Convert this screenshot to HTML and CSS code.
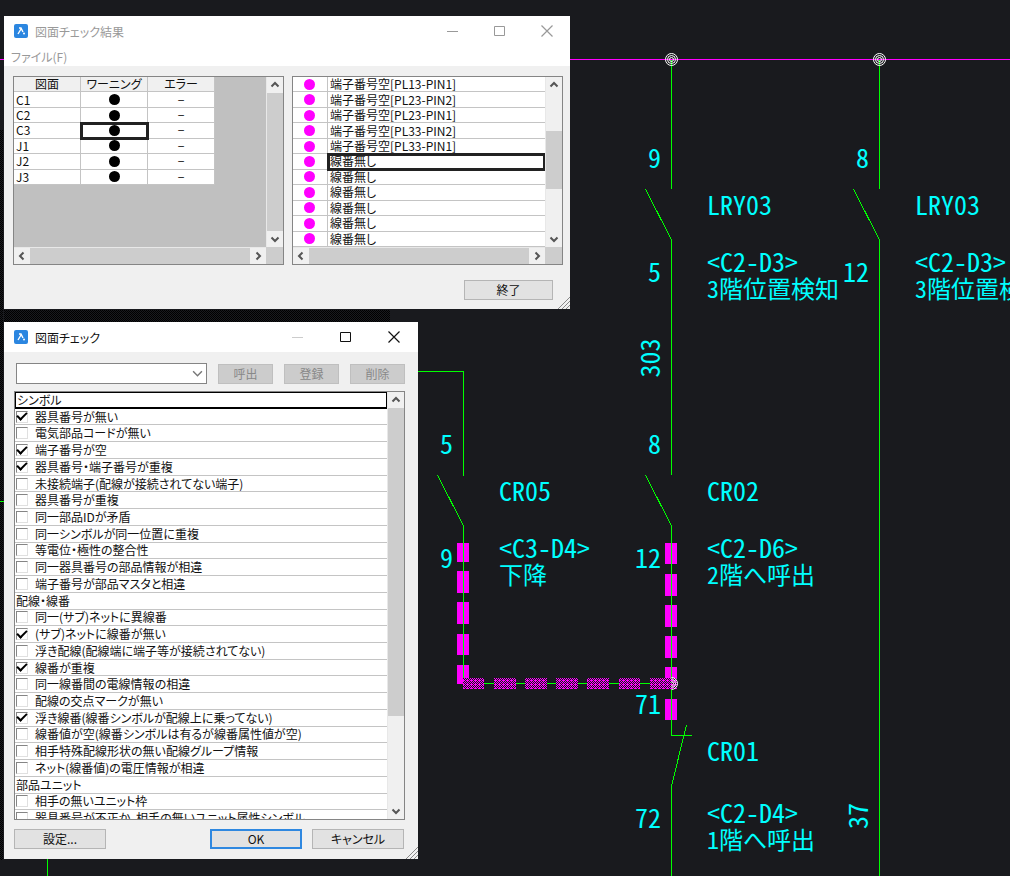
FILE: index.html
```html
<!DOCTYPE html>
<html lang="ja">
<head>
<meta charset="utf-8">
<title>図面チェック</title>
<link rel="stylesheet" href="styles.css">
</head>
<body>
<main class="desktop">
<svg class="drawing" role="img" aria-label="回路図">
  <defs>
    <pattern id="hatch" width="4" height="4" patternUnits="userSpaceOnUse"><path fill="#f0f" d="M0 0h1v1H0zM2 0h2v1H2zM1 1h1v1H1zM3 1h1v1H3zM0 2h1v1H0zM2 2h1v1H2zM1 3h1v1H1zM3 3h1v1H3z"/></pattern>
    <pattern id="shade" width="2" height="2" patternUnits="userSpaceOnUse"><path fill="#000" d="M0 0h1v1H0zM1 1h1v1H1z"/></pattern>
    <g id="node" fill="none" stroke="#fff"><circle r="6"/><circle r="4"/><circle r="2"/></g>
    <clipPath id="right-half"><path d="M0-8h8V8H0z"/></clipPath>
  </defs>
  <g shape-rendering="crispEdges">
    <path fill="url(#shade)" d="M4 310h386v12H4zM0 130h3v730H0z"/>
    <path fill="#f0f" d="M457 543h12v19h-12zM457 571h12v22h-12zM457 602h12v22h-12zM457 634h12v21h-12zM457 665h12v13h-6v6h-6zM665 543h12v21h-12zM665 574h12v22h-12zM665 605h12v22h-12zM665 636h12v22h-12zM665 667h12v11h-12zM665 699h12v21h-12z"/>
    <path class="wire" d="M671.5 59V189M645.5 189L671.5 240V475M645.5 475L671.5 526V735.5H692M686.5 725L671.5 786V876M879.5 59V189M853.5 189L879.5 240V876M418 371.5H463.5V476M437.5 475L463.5 526V678M463 683.5H671M0 501.5H4M47.5 859V876"/>
    <path class="bus" d="M0 59.5H2000"/>
    <path fill="#191a1e" d="M463 678h21v11h-21zM494 678h22v11h-22zM525 678h22v11h-22zM556 678h22v11h-22zM587 678h22v11h-22zM619 678h21v11h-21zM650 678h21v11h-21z"/>
    <path fill="url(#hatch)" d="M463 678h21v11h-21zM494 678h22v11h-22zM525 678h22v11h-22zM556 678h22v11h-22zM587 678h22v11h-22zM619 678h21v11h-21zM650 678h27v11h-27z"/>
  </g>
  <use href="#node" transform="translate(671.5 59.5)"/>
  <use href="#node" transform="translate(879.5 59.5)"/>
  <g transform="translate(671.5 683.5)"><g clip-path="url(#right-half)"><use href="#node"/></g></g>
  <g class="pin">
    <text x="661" y="168">9</text><text x="661" y="282">5</text>
    <text x="661" y="454">8</text><text x="661" y="568">12</text>
    <text x="661" y="714">71</text><text x="661" y="828">72</text>
    <text x="453" y="454">5</text><text x="453" y="568">9</text>
    <text x="869" y="168">8</text><text x="869" y="282">12</text>
  </g>
  <g class="wire-no">
    <text transform="translate(660 358) rotate(-90)">303</text>
    <text transform="translate(868 816) rotate(-90)">37</text>
  </g>
  <g class="label">
    <text x="707" y="215">LRY03</text><text x="707" y="272">&lt;C2-D3&gt;</text><text class="jp" x="707" y="298">3階位置検知</text>
    <text x="915" y="215">LRY03</text><text x="915" y="272">&lt;C2-D3&gt;</text><text class="jp" x="915" y="298">3階位置検知</text>
    <text x="499" y="501">CR05</text><text x="499" y="558">&lt;C3-D4&gt;</text><text class="jp" x="499" y="584">下降</text>
    <text x="707" y="501">CR02</text><text x="707" y="558">&lt;C2-D6&gt;</text><text class="jp" x="707" y="584">2階へ呼出</text>
    <text x="707" y="761">CR01</text><text x="707" y="823">&lt;C2-D4&gt;</text><text class="jp" x="707" y="849">1階へ呼出</text>
  </g>
</svg>

<svg class="sprites" aria-hidden="true">
  <symbol id="logo" viewBox="0 0 14 14"><rect width="14" height="14" rx="2" fill="#2b86e0"/><path d="M5 4h2l2 4M7 5L4 10" fill="none" stroke="#fff" stroke-width="1.4"/><circle cx="10" cy="9.5" r="1" fill="#fff"/></symbol>
  <symbol id="min" viewBox="0 0 12 12"><path d="M0 6.5h11" stroke="currentColor"/></symbol>
  <symbol id="max" viewBox="0 0 12 12"><path d="M.5 1.5h10v9H.5z" fill="none" stroke="currentColor"/></symbol>
  <symbol id="close" viewBox="0 0 12 12"><path d="M.5.5l11 11M11.500.5l-11 11" stroke="currentColor" stroke-width="1.2"/></symbol>
  <symbol id="arrow" viewBox="0 0 10 10"><path d="M1.500 6.500L5 3l3.500 3.500" fill="none" stroke="#555" stroke-width="2"/></symbol>
  <symbol id="grip" viewBox="0 0 12 12"><path d="M0 12L12 0M4 12l8-8M8 12l4-4" stroke="#888"/></symbol>
</svg>

<section class="window results" aria-label="図面チェック結果">
  <header class="titlebar">
    <svg class="logo"><use href="#logo"/></svg><h1>図面チェック結果</h1>
    <div class="controls">
      <button aria-label="最小化"><svg><use href="#min"/></svg></button>
      <button aria-label="最大化"><svg><use href="#max"/></svg></button>
      <button aria-label="閉じる"><svg><use href="#close"/></svg></button>
    </div>
  </header>
  <nav class="menubar"><button>ファイル(F)</button></nav>
  <div class="panes">
    <div class="pane">
      <div class="view gray">
        <table class="summary">
          <tr><th>図面</th><th>ワーニング</th><th>エラー</th></tr>
          <tr><td>C1</td><td><i class="dot"></i></td><td>−</td></tr>
          <tr><td>C2</td><td><i class="dot"></i></td><td>−</td></tr>
          <tr><td>C3</td><td class="current"><i class="dot"></i></td><td>−</td></tr>
          <tr><td>J1</td><td><i class="dot"></i></td><td>−</td></tr>
          <tr><td>J2</td><td><i class="dot"></i></td><td>−</td></tr>
          <tr><td>J3</td><td><i class="dot"></i></td><td>−</td></tr>
        </table>
      </div>
      <div class="vbar"><svg><use href="#arrow"/></svg><div class="track"><div class="thumb full"></div></div><svg class="down"><use href="#arrow"/></svg></div>
      <div class="hbar"><svg class="left"><use href="#arrow"/></svg><div class="thumb"></div><svg class="right"><use href="#arrow"/></svg></div>
      <div class="corner"></div>
    </div>
    <div class="pane">
      <div class="view">
        <table class="warnings">
          <tr><td><i class="dot pink"></i></td><td>端子番号空[PL13-PIN1]</td></tr>
          <tr><td><i class="dot pink"></i></td><td>端子番号空[PL23-PIN2]</td></tr>
          <tr><td><i class="dot pink"></i></td><td>端子番号空[PL23-PIN1]</td></tr>
          <tr><td><i class="dot pink"></i></td><td>端子番号空[PL33-PIN2]</td></tr>
          <tr><td><i class="dot pink"></i></td><td>端子番号空[PL33-PIN1]</td></tr>
          <tr><td><i class="dot pink"></i></td><td class="current">線番無し</td></tr>
          <tr><td><i class="dot pink"></i></td><td>線番無し</td></tr>
          <tr><td><i class="dot pink"></i></td><td>線番無し</td></tr>
          <tr><td><i class="dot pink"></i></td><td>線番無し</td></tr>
          <tr><td><i class="dot pink"></i></td><td>線番無し</td></tr>
          <tr><td><i class="dot pink"></i></td><td>線番無し</td></tr>
        </table>
      </div>
      <div class="vbar"><svg><use href="#arrow"/></svg><div class="track"><div class="thumb middle"></div></div><svg class="down"><use href="#arrow"/></svg></div>
      <div class="hbar"><svg class="left"><use href="#arrow"/></svg><div class="thumb"></div><svg class="right"><use href="#arrow"/></svg></div>
      <div class="corner"></div>
    </div>
  </div>
  <footer class="end"><button class="btn">終了</button></footer>
  <svg class="grip"><use href="#grip"/></svg>
</section>

<section class="window check" aria-label="図面チェック">
  <header class="titlebar">
    <svg class="logo"><use href="#logo"/></svg><h1>図面チェック</h1>
    <div class="controls">
      <button aria-label="最小化" disabled><svg><use href="#min"/></svg></button>
      <button aria-label="最大化"><svg><use href="#max"/></svg></button>
      <button aria-label="閉じる"><svg><use href="#close"/></svg></button>
    </div>
  </header>
  <div class="presets">
    <div class="combo"><select aria-label="設定名"><option></option></select><svg viewBox="0 0 10 10"><path d="M1 3l4 4 4-4" fill="none" stroke="#777" stroke-width="1.300"/></svg></div>
    <button class="btn" disabled>呼出</button><button class="btn" disabled>登録</button><button class="btn" disabled>削除</button>
  </div>
  <div class="listbox">
    <div class="rows">
      <div class="group current">シンボル</div>
      <label><input type="checkbox" checked>器具番号が無い</label>
      <label><input type="checkbox">電気部品コードが無い</label>
      <label><input type="checkbox" checked>端子番号が空</label>
      <label><input type="checkbox" checked>器具番号・端子番号が重複</label>
      <label><input type="checkbox">未接続端子(配線が接続されてない端子)</label>
      <label><input type="checkbox">器具番号が重複</label>
      <label><input type="checkbox">同一部品IDが矛盾</label>
      <label><input type="checkbox">同一シンボルが同一位置に重複</label>
      <label><input type="checkbox">等電位・極性の整合性</label>
      <label><input type="checkbox">同一器具番号の部品情報が相違</label>
      <label><input type="checkbox">端子番号が部品マスタと相違</label>
      <div class="group">配線・線番</div>
      <label><input type="checkbox">同一(サブ)ネットに異線番</label>
      <label><input type="checkbox" checked>(サブ)ネットに線番が無い</label>
      <label><input type="checkbox">浮き配線(配線端に端子等が接続されてない)</label>
      <label><input type="checkbox" checked>線番が重複</label>
      <label><input type="checkbox">同一線番間の電線情報の相違</label>
      <label><input type="checkbox">配線の交点マークが無い</label>
      <label><input type="checkbox" checked>浮き線番(線番シンボルが配線上に乗ってない)</label>
      <label><input type="checkbox">線番値が空(線番シンボルは有るが線番属性値が空)</label>
      <label><input type="checkbox">相手特殊配線形状の無い配線グループ情報</label>
      <label><input type="checkbox">ネット(線番値)の電圧情報が相違</label>
      <div class="group">部品ユニット</div>
      <label><input type="checkbox">相手の無いユニット枠</label>
      <label><input type="checkbox">器具番号が不正か、相手の無いユニット属性シンボル</label>
    </div>
    <div class="vbar"><svg><use href="#arrow"/></svg><div class="track"><div class="thumb top"></div></div><svg class="down"><use href="#arrow"/></svg></div>
  </div>
  <footer class="actions"><button class="btn">設定...</button><button class="btn default">OK</button><button class="btn">キャンセル</button></footer>
  <svg class="grip"><use href="#grip"/></svg>
</section>
</main>
</body>
</html>
```
FILE: styles.css
```css
* { box-sizing: border-box; }
body {
  margin: 0;
  background: #191a1e;
  color: #111;
  font: 12px/15px "Noto Sans CJK JP", sans-serif;
  font-feature-settings: "palt";
}
button, select { font: inherit; font-feature-settings: inherit; color: inherit; }
svg { display: block; }
.desktop { position: relative; height: 100vh; overflow: hidden; }

/* Drawing */
.drawing { position: absolute; inset: 0; width: 100%; height: 100%; }
.sprites { position: absolute; width: 0; height: 0; }
.wire { fill: none; stroke: #0f0; }
.bus { fill: none; stroke: #f0f; }
.drawing text {
  fill: #0ff;
  font-family: "Noto Sans CJK JP", sans-serif;
  font-size: 26px;
  font-feature-settings: "hwid";
}
.drawing .jp { font-size: 24px; }
.pin { text-anchor: end; }
.wire-no { text-anchor: middle; }

/* Windows */
.window { position: absolute; left: 4px; display: flex; flex-direction: column; background: #f0f0f0; }
.results { top: 16px; width: 566px; }
.check { top: 322px; width: 414px; }
.titlebar { display: flex; align-items: center; gap: 7px; height: 30px; padding-left: 10px; background: #fff; }
.logo { width: 14px; height: 14px; }
.titlebar h1 { flex: 1; margin: 0; font-size: 12px; font-weight: 400; }
.results .titlebar, .menubar { color: #999; }
.controls { display: flex; }
.controls button { display: grid; place-items: center; width: 47px; height: 30px; padding: 0; border: 0; background: none; }
.controls svg { width: 12px; height: 12px; }
.controls button:disabled { color: #ccc; }
.check .controls button { width: 48px; }
.menubar { height: 20px; padding-left: 7px; background: #fff; }
.menubar button { padding: 3px 0; border: 0; background: none; }
.grip { position: absolute; right: 0; bottom: 0; width: 12px; height: 12px; }

/* Result tables */
.panes { display: grid; grid-template-columns: 1fr 1fr; gap: 8px; padding: 10px 7px 0 9px; }
.pane { display: grid; grid-template-columns: 1fr 17px; grid-template-rows: 170px 17px; border: 1px solid #858585; }
.view { background: #fff; overflow: hidden; }
.gray { background: #c0c0c0; }
table { border-collapse: separate; border-spacing: 0; table-layout: fixed; }
.summary { width: 201px; height: 108px; }
.warnings { width: 100%; height: 170px; }
th, td { padding: 0; border: solid #c4c4c4; border-width: 0 1px 1px 0; background: #fff; line-height: 14px; }
th { background: #f0f0f0; font-weight: 400; }
.summary td { text-align: center; }
.summary td:first-child { padding-left: 2px; text-align: left; }
.warnings td { padding-left: 2px; border-right: 0; }
.warnings td:first-child { width: 35px; padding: 0 2px 0 0; border-right: 1px solid #c4c4c4; }
td.current { outline: 3px solid #222; outline-offset: -2px; }
.dot { display: block; width: 11px; height: 11px; margin: 0 auto; border-radius: 50%; background: #000; }
.pink { background: #f0f; }

/* Scroll bars */
.vbar, .hbar { display: flex; background: #f0f0f0; }
.vbar { flex-direction: column; border-left: 1px solid #e8e8e8; }
.hbar { border-top: 1px solid #e8e8e8; }
.vbar svg, .hbar svg { flex: none; width: 16px; height: 16px; padding: 3px; }
.hbar .thumb { flex: 1; }
.down { transform: rotate(180deg); }
.left { transform: rotate(-90deg); }
.right { transform: rotate(90deg); }
.track { flex: 1; display: flex; flex-direction: column; }
.thumb, .corner { background: #cdcdcd; }
.full { flex: 1; }
.middle { height: 42%; margin-top: 38px; }
.top { height: 78%; }

/* Buttons */
.btn { height: 20px; padding: 0; border: 1px solid #b5b5b5; background: #e2e2e2; text-align: center; line-height: 14px; }
.btn:disabled { border-color: #bfbfbf; background: #ccc; color: #888; }
.default { border: 2px solid #2f88e0; }
.end { display: flex; justify-content: flex-end; padding: 15px 17px 9px; }
.end .btn { width: 89px; }

/* Check dialog */
.presets { display: flex; gap: 11px; padding: 11px 13px 7px 12px; }
.combo { position: relative; flex: 1; }
.combo select { display: block; width: 100%; height: 21px; border: 1px solid #858585; border-radius: 0; background: #fff; appearance: none; }
.combo svg { position: absolute; right: 4px; top: 5px; width: 11px; height: 11px; pointer-events: none; }
.presets .btn { width: 55px; margin-top: 1px; }
.listbox { display: grid; grid-template-columns: 1fr 17px; height: 429px; margin: 0 13px 0 10px; border: 1px solid #858585; overflow: hidden; }
.rows { display: grid; grid-template-rows: repeat(26, 1fr); height: 435px; background: #fff; }
.listbox .vbar { height: 427px; }
.rows > * { display: flex; align-items: center; min-height: 0; border-bottom: 1px solid #c4c4c4; overflow: hidden; white-space: nowrap; line-height: 14px; }
.rows .group { padding-left: 1px; }
.rows .current { border: 1px solid #000; border-bottom-width: 2px; }
.rows input {
  flex: none;
  display: grid;
  place-items: center;
  width: 12px;
  height: 12px;
  margin: 0 7px 0 1px;
  border: 1px solid #e0e0e0;
  border-top-color: #858585;
  border-left-color: #858585;
  background: #fff;
  appearance: none;
}
.rows input:checked::before { content: ""; width: 8px; height: 4px; margin-bottom: 3px; border: solid #000; border-width: 0 0 2px 2px; transform: rotate(-45deg); }
.actions { display: flex; gap: 10px; padding: 9px 14px 10px 10px; }
.actions .btn { width: 92px; }
.actions .btn:first-child { margin-right: auto; }
```
